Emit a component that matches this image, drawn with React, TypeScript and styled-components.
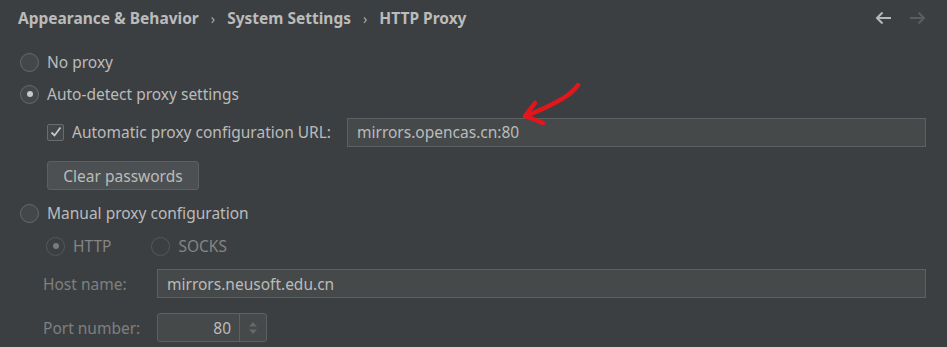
import React from 'react'
import styled, { createGlobalStyle } from 'styled-components'

const GlobalStyle = createGlobalStyle`
    html, body {
        margin: 0;
        padding: 0;
        background: #3c3f41;
    }
    body {
        font-family: 'Noto Sans', 'Open Sans', sans-serif;
        font-size: 15.5px;
        color: #bbbbbb;
    }
`

const Radio = ({ checked, dim, label }: { checked?: boolean; dim?: boolean; label: string }) => (
    <OptionRow dim={dim}>
        <RadioCircle dim={dim}>{checked && <RadioDot dim={dim} />}</RadioCircle>
        <span>{label}</span>
    </OptionRow>
)

export default function App() {
    return (
        <Page>
            <GlobalStyle />
            <Header>
                <Crumbs>
                    <Crumb>Appearance &amp; Behavior</Crumb>
                    <Sep>›</Sep>
                    <Crumb>System Settings</Crumb>
                    <Sep>›</Sep>
                    <Crumb>HTTP Proxy</Crumb>
                </Crumbs>
                <NavArrows>
                    <svg width="17" height="14" viewBox="0 0 17 14">
                        <path d="M16 7H2M7.5 1.5L2 7L7.5 12.5" fill="none" stroke="#b8b8b8" strokeWidth="2" />
                    </svg>
                    <svg width="17" height="14" viewBox="0 0 17 14">
                        <path d="M1 7H15M9.5 1.5L15 7L9.5 12.5" fill="none" stroke="#5b5e60" strokeWidth="2" />
                    </svg>
                </NavArrows>
            </Header>
            <Body>
                <Radio label="No proxy" />
                <Radio checked label="Auto-detect proxy settings" />
                <Indented>
                    <UrlRow>
                        <OptionRow>
                            <Checkbox>
                                <svg width="12" height="12" viewBox="0 0 12 12">
                                    <path d="M1.5 6.5L4.5 9.5L10.5 1.5" fill="none" stroke="#c8c8c8" strokeWidth="1.8" />
                                </svg>
                            </Checkbox>
                            <span>Automatic proxy configuration URL:</span>
                        </OptionRow>
                        <TextField grow>mirrors.opencas.cn:80</TextField>
                        <RedArrow width="66" height="46" viewBox="0 0 66 46">
                            <path d="M58 3 C52 12 40 20 6 34" fill="none" stroke="#e3161c" strokeWidth="4.5" strokeLinecap="round" />
                            <path d="M15 21 L5 34 L23 41" fill="none" stroke="#e3161c" strokeWidth="4.5" strokeLinecap="round" strokeLinejoin="round" />
                        </RedArrow>
                    </UrlRow>
                    <Button>Clear passwords</Button>
                </Indented>
                <Radio label="Manual proxy configuration" />
                <ProtoRow>
                    <Radio dim checked label="HTTP" />
                    <Radio dim label="SOCKS" />
                </ProtoRow>
                <FieldGrid>
                    <FieldLabel>Host name:</FieldLabel>
                    <TextField>mirrors.neusoft.edu.cn</TextField>
                    <FieldLabel>Port number:</FieldLabel>
                    <Spinner>
                        <SpinnerValue>80</SpinnerValue>
                        <SpinnerButtons>
                            <svg width="10" height="16" viewBox="0 0 10 16">
                                <path d="M1 6.5L5 2L9 6.5Z M1 9.5L5 14L9 9.5Z" fill="#66696b" />
                            </svg>
                        </SpinnerButtons>
                    </Spinner>
                </FieldGrid>
            </Body>
        </Page>
    )
}

const Page = styled.div`
    width: 947px;
    height: 347px;
    overflow: hidden;
    background: #3c3f41;
`
const Header = styled.div`
    display: flex;
    align-items: center;
    justify-content: space-between;
    height: 36px;
    padding: 0 21px 0 18px;
`
const Crumbs = styled.div`
    display: flex;
    align-items: center;
    gap: 12px;
`
const Crumb = styled.span`
    font-weight: 700;
    font-size: 15.5px;
    color: #bbbbbb;
`
const Sep = styled.span`
    font-size: 14px;
    color: #aaaaaa;
`
const NavArrows = styled.div`
    display: flex;
    gap: 17px;
    align-items: center;
`
const Body = styled.div`
    display: flex;
    flex-direction: column;
    padding: 10px 21px 0 20px;
`
const OptionRow = styled.div<{ dim?: boolean }>`
    display: flex;
    align-items: center;
    gap: 8px;
    height: 32px;
    color: ${(p) => (p.dim ? '#858585' : '#bbbbbb')};
    white-space: nowrap;
`
const RadioCircle = styled.span<{ dim?: boolean }>`
    width: 17px;
    height: 17px;
    border-radius: 50%;
    border: 1px solid ${(p) => (p.dim ? '#555759' : '#67696b')};
    background: ${(p) => (p.dim ? '#3c3f41' : '#43474a')};
    display: flex;
    align-items: center;
    justify-content: center;
`
const RadioDot = styled.span<{ dim?: boolean }>`
    width: 6px;
    height: 6px;
    border-radius: 50%;
    background: ${(p) => (p.dim ? '#7a7a7a' : '#c8c8c8')};
`
const Checkbox = styled.span`
    width: 15px;
    height: 15px;
    border: 1px solid #6b6b6b;
    border-radius: 2px;
    background: #43474a;
    display: flex;
    align-items: center;
    justify-content: center;
`
const Indented = styled.div`
    display: flex;
    flex-direction: column;
    padding-left: 27px;
`
const UrlRow = styled.div`
    position: relative;
    display: flex;
    align-items: center;
    gap: 16px;
    height: 44px;
`
const TextField = styled.div<{ grow?: boolean }>`
    ${(p) => (p.grow ? 'flex: 1;' : '')}
    height: 29px;
    box-sizing: border-box;
    border: 1px solid #5e6163;
    background: #45494a;
    padding: 0 9px;
    display: flex;
    align-items: center;
    color: #bbbbbb;
    font-size: 15.5px;
`
const RedArrow = styled.svg`
    position: absolute;
    left: 473px;
    top: -28px;
`
const Button = styled.div`
    align-self: flex-start;
    margin-top: 7px;
    width: 152px;
    height: 29px;
    box-sizing: border-box;
    border: 1px solid #5e6060;
    border-radius: 3px;
    background: #4c5052;
    display: flex;
    align-items: center;
    justify-content: center;
    color: #bbbbbb;
    margin-bottom: 7px;
`
const ProtoRow = styled.div`
    display: flex;
    gap: 40px;
    padding-left: 26px;
    margin-top: 1px;
`
const FieldGrid = styled.div`
    display: grid;
    grid-template-columns: 114px 1fr;
    grid-auto-rows: 29px;
    align-items: center;
    row-gap: 15px;
    padding-left: 23px;
    margin-top: 7px;
`
const FieldLabel = styled.span`
    color: #7f7f7f;
`
const Spinner = styled.div`
    width: 110px;
    height: 29px;
    box-sizing: border-box;
    border: 1px solid #5e6163;
    border-radius: 3px;
    background: #45494a;
    display: flex;
`
const SpinnerValue = styled.div`
    flex: 1;
    display: flex;
    align-items: center;
    justify-content: flex-end;
    padding-right: 8px;
    border-right: 1px solid #5e6163;
    color: #bbbbbb;
`
const SpinnerButtons = styled.div`
    width: 26px;
    display: flex;
    align-items: center;
    justify-content: center;
`
